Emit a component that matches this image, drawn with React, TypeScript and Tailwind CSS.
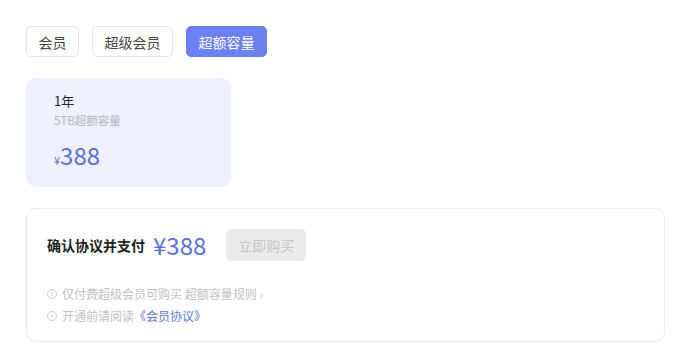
const FONT = { fontFamily: '"Noto Sans CJK SC", "Noto Sans", sans-serif' }

const TABS = ['会员', '超级会员', '超额容量']

function Info() {
  return (
    <span className="inline-flex h-[10px] w-[10px] items-center justify-center rounded-full border border-[#cfcfcf] text-[7px] leading-none text-[#c4c4c4]">
      i
    </span>
  )
}

export default function App() {
  const active = 2
  return (
    <div className="min-h-[363px] w-[686px] bg-white px-[26px] pt-[26px]" style={FONT}>
      <div className="flex gap-[13px]">
        {TABS.map((t, i) => (
          <button
            key={t}
            className={`h-[31px] rounded-[5px] border px-[11.5px] text-[14px] leading-none ${
              i === active ? 'border-[#6a80f3] bg-[#6a80f3] text-white' : 'border-[#e6e6e6] bg-white text-[#444]'
            }`}
          >
            {t}
          </button>
        ))}
      </div>

      <div className="mt-[21px] h-[109px] w-[205px] rounded-[10px] bg-[#eef0fd] pl-[28px] pt-[14px]">
        <div className="text-[13px] leading-[18px] text-[#222]">1年</div>
        <div className="mt-[2px] text-[11.5px] leading-[16px] text-[#b4b6c4]">5TB超额容量</div>
        <div className="mt-[13px] flex items-baseline text-[#5b70d6]">
          <span className="text-[11px]">¥</span>
          <span className="text-[24px] leading-[28px]">388</span>
        </div>
      </div>

      <div className="mt-[21px] h-[134px] w-[639px] rounded-[10px] border border-[#ececec] px-[20px] pt-[20px]">
        <div className="flex items-center">
          <span className="text-[14px] font-bold text-[#222]">确认协议并支付</span>
          <span className="ml-[8px] text-[24px] leading-none text-[#5b70d6]">¥388</span>
          <button className="ml-[20px] h-[32px] w-[80px] rounded-[5px] bg-[#ebebeb] text-[14px] text-[#c6c6c6]">
            立即购买
          </button>
        </div>
        <div className="mt-[24px] flex flex-col gap-[5px] text-[12px] leading-[17px] text-[#c2c2c2]">
          <div className="flex items-center gap-[5px]">
            <Info />
            <span>仅付费超级会员可购买 超额容量规则 ›</span>
          </div>
          <div className="flex items-center gap-[5px]">
            <Info />
            <span>
              开通前请阅读<span className="text-[#6276d8]">《会员协议》</span>
            </span>
          </div>
        </div>
      </div>
    </div>
  )
}
